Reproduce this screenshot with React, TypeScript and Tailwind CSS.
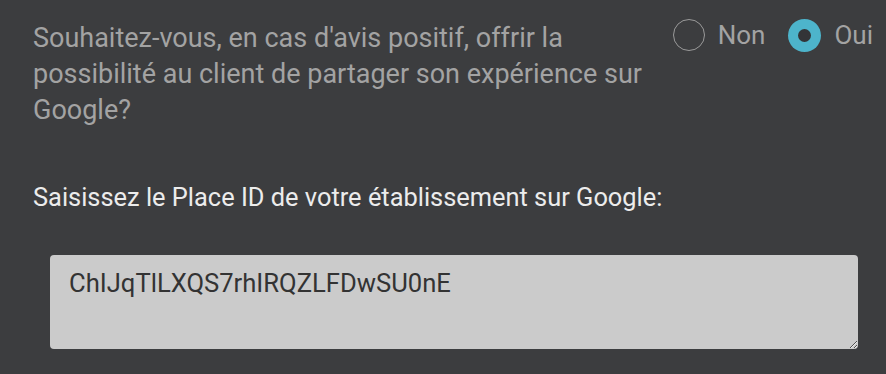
import React from "react";

export default function App() {
  return (
    <div
      className="w-[886px] h-[374px] bg-[#3c3d3f] pl-[33px] pr-[13px] pt-[20px] overflow-hidden"
      style={{ fontFamily: "Roboto, 'Liberation Sans', sans-serif" }}
    >
      <div className="flex justify-between items-start">
        <p className="w-[615px] text-[27px] leading-[36px] text-[#a3a3a3]">
          Souhaitez-vous, en cas d'avis positif, offrir la possibilité au client de partager son expérience sur Google?
        </p>
        <div className="flex items-center mt-[-2px] h-[34px] text-[26px] text-[#a3a3a3]">
          <label className="flex items-center gap-[13px]">
            <span className="w-[32px] h-[32px] rounded-full border border-[#9a9a9a]" />
            <span>Non</span>
          </label>
          <label className="flex items-center gap-[13px] ml-[23px]">
            <span className="w-[33px] h-[33px] rounded-full bg-[#4db4cb] flex items-center justify-center">
              <span className="w-[13px] h-[13px] rounded-full bg-[#333437]" />
            </span>
            <span>Oui</span>
          </label>
        </div>
      </div>

      <p className="mt-[51px] text-[25.4px] leading-[36px] text-[#ececec]">
        Saisissez le Place ID de votre établissement sur Google:
      </p>

      <textarea
        defaultValue="ChIJqTlLXQS7rhIRQZLFDwSU0nE"
        className="block mt-[40px] ml-[17px] w-[808px] h-[94px] rounded-[4px] bg-[#cbcbcb] text-[#333333] text-[25.6px] leading-[30px] pt-[13px] px-[19px] outline-none resize-y"
      />
    </div>
  );
}
